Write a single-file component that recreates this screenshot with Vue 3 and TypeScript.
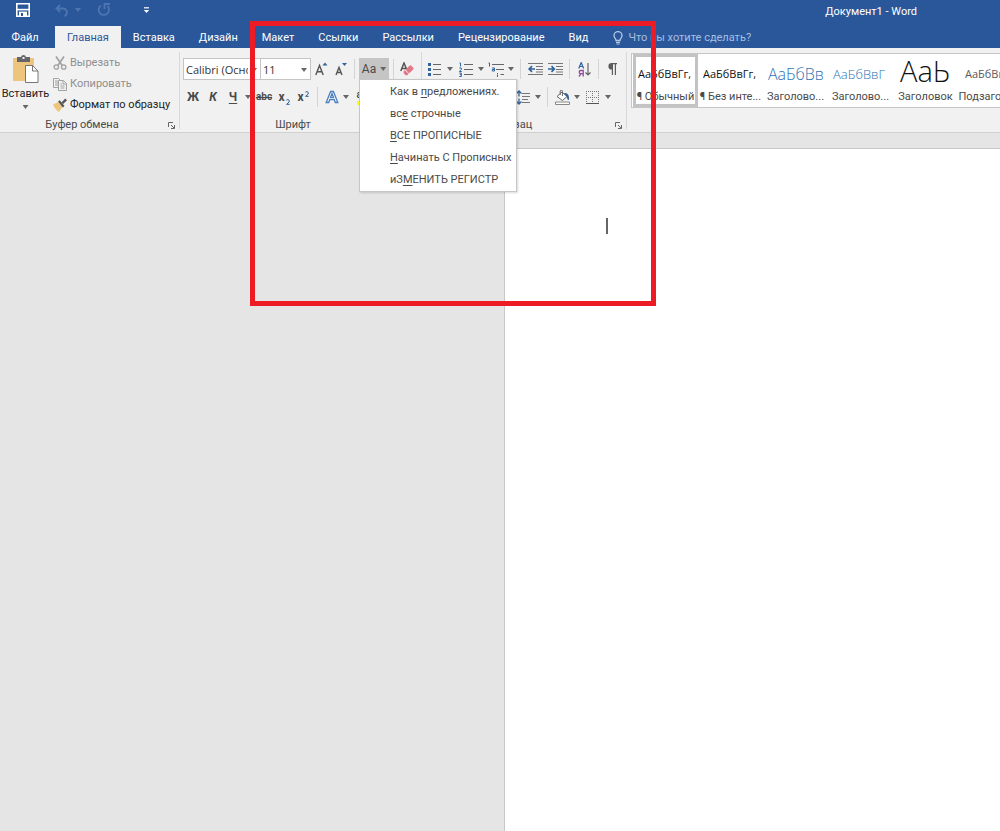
<script setup lang="ts">
import { ref } from 'vue'

interface StyleCard {
  preview: string
  label: string
  kind: string
}

interface CaseItem {
  before: string
  key: string
  after: string
}

const tabs: string[] = ['Файл', 'Главная', 'Вставка', 'Дизайн', 'Макет', 'Ссылки', 'Рассылки', 'Рецензирование', 'Вид']
const activeTab = ref('Главная')
const activeStyle = ref('normal')
const fontName = ref('Calibri (Основной текст)')
const fontSize = ref('11')

const caseItems: CaseItem[] = [
  { before: 'Как в ', key: 'п', after: 'редложениях.' },
  { before: 'вс', key: 'е', after: ' строчные' },
  { before: '', key: 'В', after: 'СЕ ПРОПИСНЫЕ' },
  { before: '', key: 'Н', after: 'ачинать С Прописных' },
  { before: 'иЗ', key: 'М', after: 'ЕНИТЬ РЕГИСТР' },
]

const styleCards: StyleCard[] = [
  { preview: 'АаБбВвГг,', label: '¶ Обычный', kind: 'normal' },
  { preview: 'АаБбВвГг,', label: '¶ Без инте...', kind: 'plain' },
  { preview: 'АаБбВв', label: 'Заголово...', kind: 'h1' },
  { preview: 'АаБбВвГ', label: 'Заголово...', kind: 'h2' },
  { preview: 'АаЬ', label: 'Заголовок', kind: 'title' },
  { preview: 'АаБбВв', label: 'Подзаголо...', kind: 'subtitle' },
]
</script>

<template>
  <div class="app">
    <header class="titlebar">
      <div class="quick">
        <button class="q-save" aria-label="Сохранить">
          <svg width="14" height="14" viewBox="0 0 14 14"><path d="M.8.8h12.4v12.4H.8z" fill="none" stroke="#fff" stroke-width="1.6" /><path d="M1 6.6h12" stroke="#fff" stroke-width="1.6" /><path d="M3 8.6h8V14H3z" fill="#fff" /><path d="M5 10h2v3H5z" fill="#2b579a" /></svg>
        </button>
        <button class="q-undo" aria-label="Отменить">
          <svg width="15" height="13" viewBox="0 0 15 13"><path d="M5 1 1.5 4.5 5 8M2 4.5h6.5a4 4 0 0 1 1 7.6" fill="none" stroke="#4d75b1" stroke-width="1.8" /></svg>
        </button>
        <span class="caret dim"></span>
        <button class="q-redo" aria-label="Повторить">
          <svg width="14" height="14" viewBox="0 0 14 14"><path d="M4 2.4A5.2 5.2 0 1 0 10.4 3M7.5 6V1H13" fill="none" stroke="#4d75b1" stroke-width="1.8" /></svg>
        </button>
        <button class="q-more" aria-label="Настройка панели">
          <svg width="7" height="7" viewBox="0 0 7 7"><path d="M1 .8h5" stroke="#fff" stroke-width="1.2" /><path d="M.8 3h5.4L3.5 6z" fill="#fff" /></svg>
        </button>
      </div>
      <span class="doc-title">Документ1 - Word</span>
    </header>

    <nav class="tabs">
      <button
        v-for="tab in tabs"
        :key="tab"
        class="tab"
        :class="{ active: tab === activeTab, file: tab === 'Файл' }"
        @click="activeTab = tab"
      >{{ tab }}</button>
      <label class="tell">
        <svg width="10" height="14" viewBox="0 0 10 14"><path d="M3 9.500C3 7.700 1 7 1 4.600a4 4 0 0 1 8 0C9 7 7 7.700 7 9.500z" fill="none" stroke="#b4c7e4" stroke-width="1.300" /><path d="M3 11.300h4M3.500 13h3" stroke="#b4c7e4" stroke-width="1.200" /></svg>
        <input type="text" placeholder="Что вы хотите сделать?" aria-label="Что вы хотите сделать?" />
      </label>
    </nav>

    <section class="ribbon">
      <div class="group clipboard">
        <div class="clip-body">
          <button class="paste">
            <svg width="28" height="28" viewBox="0 0 28 28"><path d="M1 3h21v23H1z" fill="#edc57c" /><path d="M5 2h4a2.600 2.600 0 0 1 5 0h4v5H5z" fill="#66666a" /><path d="M10.500 2h2v2h-2z" fill="#f1f1f1" /><path d="M13.500 10.500h7l5.500 5.500v11.500H13.500z" fill="#fff" stroke="#77777a" /><path d="M20.500 10.500V16H26" fill="none" stroke="#77777a" /></svg>
            <span>Вставить</span>
            <i class="caret"></i>
          </button>
          <div class="clip-list">
            <button class="muted">
              <svg width="14" height="14" viewBox="0 0 14 14"><path d="m3 .5 6.200 9M11 .5 4.800 9.500" stroke="#a2a2a2" stroke-width="1.700" /><circle cx="3.300" cy="11" r="2.200" fill="none" stroke="#a2a2a2" stroke-width="1.300" /><circle cx="10.700" cy="11" r="2.200" fill="none" stroke="#a2a2a2" stroke-width="1.300" /></svg>
              Вырезать
            </button>
            <button class="muted">
              <svg width="14" height="14" viewBox="0 0 14 14"><path d="M5 10.500H.5V1.500h5L7 3M2 4h3M2 6h3M2 8h3M5.500 3.500h5l3 3v7h-8zM10 3.500V7h3.500M7.500 7H9M7.500 9h4M7.500 11h4" fill="none" stroke="#a2a2a2" /></svg>
              Копировать
            </button>
            <button>
              <svg width="14" height="14" viewBox="0 0 14 14"><path d="M0 6.500 5 4l4.500 5L6 14C3.500 12.500 1.500 10 0 6.500z" fill="#edc57c" /><path d="m5 3.500 1.800-1.300L11.500 8l-1.700 1.500z" fill="#555" /><path d="m8.500 4.500 3.700-4L14 2.300 10.200 6z" fill="#555" /></svg>
              Формат по образцу
            </button>
          </div>
        </div>
        <footer><span>Буфер обмена</span><button class="launch" aria-label="Буфер обмена: параметры"><svg width="7" height="7" viewBox="0 0 7 7"><path d="M.5 5V.5H5M3 3l3 3M6.500 3v3.500H3" fill="none" stroke="#666" /></svg></button></footer>
      </div>

      <div class="group font">
        <div class="row">
          <span class="combo name">
            <select v-model="fontName" aria-label="Шрифт"><option>Calibri (Основной текст)</option><option>Arial</option></select>
            <i class="caret"></i>
          </span>
          <span class="combo size">
            <select v-model="fontSize" aria-label="Размер шрифта"><option>11</option><option>12</option></select>
            <i class="caret"></i>
          </span>
          <button class="w21" aria-label="Увеличить размер"><svg width="13" height="14" viewBox="0 0 13 14"><path d="m.8 13 3.700-9.500L8.200 13M2.200 9.800h4.600" fill="none" stroke="#555" stroke-width="1.400" /><path d="M7.500 3.500h5L10 .5z" fill="#31639c" /></svg></button>
          <button class="w18" aria-label="Уменьшить размер"><svg width="12" height="14" viewBox="0 0 12 14"><path d="m1 13 3-7.500L7 13M2.200 10.500h3.600" fill="none" stroke="#555" stroke-width="1.400" /><path d="M7 1h5L9.500 4z" fill="#31639c" /></svg></button>
          <i class="sep"></i>
          <div class="case">
            <button class="case-button" aria-haspopup="menu" aria-expanded="true">Аа<i class="caret"></i></button>
            <div class="case-menu" role="menu">
              <button v-for="item in caseItems" :key="item.key" role="menuitem"><span>{{ item.before }}<u>{{ item.key }}</u>{{ item.after }}</span></button>
            </div>
          </div>
          <i class="sep"></i>
          <button class="w18" aria-label="Очистить формат"><svg width="14" height="14" viewBox="0 0 14 14"><path d="M.8 9 4 1l2.500 6M2 6.500h4" fill="none" stroke="#555" stroke-width="1.500" /><path d="m3.500 9.500 6.200-6a1 1 0 0 1 1.400 0l2.200 2.300a1 1 0 0 1 0 1.400l-6 6H5.500l-2-2.200z" fill="#e3788b" /><path d="m5.300 8 3.800 3.800" stroke="#f1f1f1" /></svg></button>
        </div>
        <div class="row">
          <button class="w20 bold">Ж</button>
          <button class="w20 bold italic">К</button>
          <button class="w20 bold"><u>Ч</u></button>
          <button class="w10" aria-label="Вид подчёркивания"><i class="caret"></i></button>
          <button class="w22 strike">abc</button>
          <button class="w18 bold index"><span>x</span><svg width="4" height="6" viewBox="0 0 4 6"><path d="M.4 1.200Q2-.2 3.200 1.300T.5 5.300h3.200" fill="none" stroke="#31639c" /></svg></button>
          <button class="w20 bold index up"><span>x</span><svg width="4" height="6" viewBox="0 0 4 6"><path d="M.4 1.200Q2-.2 3.200 1.300T.5 5.300h3.200" fill="none" stroke="#31639c" /></svg></button>
          <i class="sep"></i>
          <button class="w20" aria-label="Текстовые эффекты"><svg width="14" height="14" viewBox="0 0 14 14"><path d="M1.200 12.500 5.600 1.500h2.800l4.400 11h-2.500l-1-2.800H4.700l-1 2.800zM5.400 7.700h3.200L7 3.500z" fill="#fff" stroke="#4c7fbe" stroke-width="1.300" /></svg></button>
          <button class="w8" aria-label="Выбор эффекта"><i class="caret"></i></button>
          <button class="w24 marker" aria-label="Цвет выделения"><span>ab</span></button>
        </div>
        <footer><span>Шрифт</span></footer>
      </div>

      <div class="group paragraph">
        <div class="row">
          <button class="w20" aria-label="Маркеры"><svg width="13" height="14" viewBox="0 0 13 14"><path d="M5 2.500h8M5 7.500h8M5 12.500h8" stroke="#666" /><path d="M0 1h3v3H0zM0 6h3v3H0zM0 11h3v3H0z" fill="#31639c" /></svg></button>
          <button class="w12" aria-label="Виды маркеров"><i class="caret"></i></button>
          <button class="w20" aria-label="Нумерация"><svg width="14" height="15" viewBox="0 0 14 15"><path d="M5 2.500h9M5 7.500h9M5 12.500h9" stroke="#666" /><path d="M.5 1h1v3.500M.3 6h2v1.500l-2 2h2.400M.3 11h2v3.500h-2M.8 12.600h1.500" fill="none" stroke="#31639c" /></svg></button>
          <button class="w10" aria-label="Виды нумерации"><i class="caret"></i></button>
          <button class="w20" aria-label="Многоуровневый список"><svg width="16" height="15" viewBox="0 0 16 15"><path d="M4 2.500h12M8 7.500h8M12.500 12.500H16" stroke="#666" /><path d="M.5 1h1v3.500M4 6h2.500v3H4.300V7.500h2M9.500 11v1M9.500 12.500V15" fill="none" stroke="#31639c" /></svg></button>
          <button class="w10" aria-label="Уровни списка"><i class="caret"></i></button>
          <i class="sep"></i>
          <button class="w20" aria-label="Уменьшить отступ"><svg width="15" height="12" viewBox="0 0 15 12"><path d="M0 .5h15M8 3.500h7M8 6.500h7M8 9h7M0 11.500h15" stroke="#777" /><path d="M7 6H1.500M4 3.200 1.200 6 4 8.800" fill="none" stroke="#31639c" stroke-width="1.700" /></svg></button>
          <button class="w20" aria-label="Увеличить отступ"><svg width="15" height="12" viewBox="0 0 15 12"><path d="M0 .5h15M8 3.500h7M8 6.500h7M8 9h7M0 11.500h15" stroke="#777" /><path d="M0 6h5.500M3.500 3.200 6.300 6 3.500 8.800" fill="none" stroke="#31639c" stroke-width="1.700" /></svg></button>
          <i class="sep"></i>
          <button class="w20" aria-label="Сортировка"><svg width="13" height="15" viewBox="0 0 13 15"><path d="m.7 6.500 2.500-6 2.500 6M1.600 4.500h3.200" fill="none" stroke="#31639c" stroke-width="1.200" /><path d="M5.200 14.500v-6H2.800a1.500 1.500 0 0 0 0 3.200h2.400M3 11.700l-2 2.800" fill="none" stroke="#8f4a9e" stroke-width="1.300" /><path d="M10 1v12M7.500 10.500 10 13l2.500-2.500" fill="none" stroke="#666" stroke-width="1.200" /></svg></button>
          <i class="sep"></i>
          <button class="w18" aria-label="Непечатаемые знаки"><svg width="10" height="12" viewBox="0 0 10 12"><path d="M4.500 0H10v1.200H9V12H7.800V1.200H6V12H4.800V6.500A3.200 3.200 0 0 1 4.500 0z" fill="#5c5c5c" /></svg></button>
        </div>
        <div class="row">
          <button v-for="side in ['По левому краю', 'По центру', 'По правому краю', 'По ширине']" :key="side" class="w20" :aria-label="side"><svg width="13" height="12" viewBox="0 0 13 12"><path d="M0 .5h13M0 4h13M0 7.500h13M0 11h13" stroke="#666" /></svg></button>
          <i class="sep"></i>
          <button class="w20" aria-label="Интервал"><svg width="14" height="15" viewBox="0 0 14 15"><path d="M6 3.500h8M6 6.500h8M6 9.500h6M6 12.500h8" stroke="#777" /><path d="M3 1v5.500M.5 3.500 3 1l2.500 2.500M3 8.500V14M.5 11.500 3 14l2.500-2.500" fill="none" stroke="#31639c" stroke-width="1.300" /></svg></button>
          <button class="w10" aria-label="Выбор интервала"><i class="caret"></i></button>
          <i class="sep"></i>
          <button class="w20" aria-label="Заливка"><svg width="15" height="15" viewBox="0 0 15 15"><path d="M.5 12h14v2.500H.5z" fill="#fff" stroke="#888" /><path d="m2 6.500 5-4.500 5 4.500-4.500 4z" fill="#fff" stroke="#666" /><path d="M5.200 5V1.200a1 1 0 0 1 2.200 0V6" fill="none" stroke="#666" /><path d="M9 3.200c3-.5 5.500 1.300 5 6.800-1.500 0-2-1-2-3z" fill="#31639c" /></svg></button>
          <button class="w10" aria-label="Цвет заливки"><i class="caret"></i></button>
          <button class="w20" aria-label="Границы"><svg width="13" height="13" viewBox="0 0 13 13"><path d="M0 .5h13M0 6.500h13M.5 0v12M6.500 0v12M12.500 0v12" stroke="#777" stroke-dasharray="1 1" /><path d="M0 12.500h13" stroke="#555" /></svg></button>
          <button class="w12" aria-label="Виды границ"><i class="caret"></i></button>
        </div>
        <footer><span>Абзац</span><button class="launch" aria-label="Абзац: параметры"><svg width="7" height="7" viewBox="0 0 7 7"><path d="M.5 5V.5H5M3 3l3 3M6.500 3v3.500H3" fill="none" stroke="#666" /></svg></button></footer>
      </div>

      <div class="gallery">
        <button
          v-for="card in styleCards"
          :key="card.kind"
          class="card"
          :class="[card.kind, { chosen: card.kind === activeStyle }]"
          @click="activeStyle = card.kind"
        >
          <span class="preview">{{ card.preview }}</span>
          <span class="card-label">{{ card.label }}</span>
        </button>
      </div>
    </section>

    <main class="canvas">
      <article class="page"><i class="text-cursor"></i></article>
    </main>

    <div class="highlight" aria-hidden="true"></div>
  </div>
</template>

<style>
body {
  margin: 0;
}
</style>

<style scoped>
.app {
  position: relative;
  display: flex;
  flex-direction: column;
  min-height: 100vh;
  overflow: hidden;
  background: #e5e5e5;
  color: #4a4a4a;
  font-family: Roboto, "Open Sans", sans-serif;
  font-size: 11px;
  line-height: 16px;
}
.app * {
  box-sizing: border-box;
}
button {
  display: flex;
  align-items: center;
  justify-content: center;
  flex: none;
  margin: 0;
  padding: 0;
  border: 0;
  background: none;
  color: inherit;
  font: inherit;
  white-space: nowrap;
}
svg {
  display: block;
  flex: none;
}
.caret {
  flex: none;
  width: 6px;
  height: 4px;
  background: #666;
  clip-path: polygon(0 0, 100% 0, 50% 100%);
}
.caret.dim {
  background: #4d75b1;
}

.titlebar {
  display: flex;
  justify-content: space-between;
  height: 25px;
  padding: 0 83px 0 16px;
  background: #2a579a;
  color: #fff;
}
.quick {
  display: flex;
  align-items: center;
  height: 20px;
}
.q-undo {
  margin-left: 25px;
}
.quick .dim {
  margin-left: 5px;
}
.q-redo {
  margin-left: 16px;
}
.q-more {
  margin-left: 32px;
}
.doc-title {
  padding-top: 4px;
}

.tabs {
  display: flex;
  height: 23px;
  background: #2a579a;
  color: #fff;
}
.tab {
  height: 23px;
  padding: 2px 12px 0;
}
.tab.file {
  width: 55px;
  padding: 2px 17px 0 12px;
}
.tab.active {
  height: 22px;
  margin-top: 1px;
  padding-top: 1px;
  background: #f1f1f1;
  color: #2a579a;
}
.tell {
  display: flex;
  align-items: center;
  gap: 5px;
  margin-left: 13px;
  padding-top: 2px;
  flex: 1;
}
.tell input {
  flex: 1;
  min-width: 0;
  padding: 0;
  border: 0;
  outline: 0;
  background: none;
  color: #fff;
  font: inherit;
}
.tell input::placeholder {
  color: #a9bfe0;
  opacity: 1;
}

.ribbon {
  display: flex;
  height: 85px;
  background: #f1f1f1;
  border-bottom: 1px solid #d0d0d0;
}
.group {
  position: relative;
  display: flex;
  flex-direction: column;
  flex: none;
  margin: 4px 0 3px;
  border-right: 1px solid #d8d8d8;
}
.group footer {
  display: flex;
  height: 16px;
  margin-top: auto;
  margin-bottom: -4px;
}
.group footer span {
  flex: 1;
  text-align: center;
}
.launch {
  width: 15px;
}
.clipboard {
  width: 180px;
}
.clip-body {
  display: flex;
}
.paste {
  flex-direction: column;
  justify-content: flex-start;
  width: 51px;
  padding-top: 3px;
  color: #222;
}
.paste span {
  margin-top: 3px;
}
.paste .caret {
  margin-top: 3px;
}
.clip-list {
  display: flex;
  flex-direction: column;
  margin-left: 2px;
}
.clip-list button {
  justify-content: flex-start;
  gap: 3px;
  height: 21px;
  color: #222;
}
.clip-list .muted {
  color: #8f8f8f;
}
.font {
  width: 242px;
}
.font .row {
  padding-left: 3px;
}
.font footer {
  margin-right: 15px;
}
.paragraph {
  width: 205px;
}
.row {
  display: flex;
  align-items: center;
  height: 22px;
  margin-top: 6px;
}
.paragraph .row {
  padding-left: 2px;
}
.row > button {
  height: 22px;
}
.w8 { width: 8px; }
.w10 { width: 10px; }
.w12 { width: 12px; }
.w18 { width: 18px; }
.w20 { width: 20px; }
.w21 { width: 21px; }
.w22 { width: 22px; }
.w24 { width: 24px; }
.sep {
  flex: none;
  width: 1px;
  height: 20px;
  margin: 0 4px;
  background: #d4d4d4;
}
.combo {
  position: relative;
  flex: none;
  height: 22px;
}
.combo select {
  width: 100%;
  height: 100%;
  margin: 0;
  padding: 0 12px 0 2px;
  border: 1px solid #c4c4c4;
  border-radius: 0;
  appearance: none;
  background: #fff;
  color: #333;
  font-family: "Open Sans", sans-serif;
  font-size: 11px;
}
.combo .caret {
  position: absolute;
  right: 4px;
  top: 10px;
}
.combo.name {
  width: 78px;
}
.combo.size {
  width: 51px;
  margin-left: -1px;
}
.bold {
  font-size: 12px;
  font-weight: 700;
}
.italic {
  font-style: italic;
}
.strike {
  text-decoration: line-through;
  font-size: 10px;
  font-weight: 600;
}
.index {
  gap: 1px;
}
.index svg {
  margin-top: 9px;
}
.index.up svg {
  margin-top: 0;
  margin-bottom: 6px;
}
.marker {
  font-size: 10px;
  font-weight: 600;
}
.marker span {
  height: 16px;
  line-height: 12px;
  border-bottom: 4px solid #ff0;
}
.case {
  position: relative;
}
.case-button {
  gap: 4px;
  width: 30px;
  height: 22px;
  background: #c5c5c5;
  font-size: 12px;
}
.case-menu {
  position: absolute;
  z-index: 2;
  top: 21px;
  left: 0;
  min-width: 158px;
  padding-top: 1px;
  border: 1px solid #c6c6c6;
  background: #fff;
  box-shadow: 1px 1px 2px rgba(0, 0, 0, 0.15);
}
.case-menu button {
  justify-content: flex-start;
  width: 100%;
  height: 22px;
  padding: 0 4px 0 30px;
}
u {
  text-underline-offset: 2px;
}

.gallery {
  display: flex;
  flex: 1;
  min-width: 0;
  height: 55px;
  margin: 5px 0 0 4px;
  padding-left: 1px;
  overflow: hidden;
  border: 1px solid #c6c6c6;
  border-right: 0;
  background: #fff;
}
.card {
  flex-direction: column;
  justify-content: flex-start;
  width: 65px;
  height: 53px;
  padding: 4px 4px 0;
}
.card.chosen {
  box-shadow: inset 0 0 0 3px #c3c3c3;
}
.preview {
  display: flex;
  align-items: center;
  width: 55px;
  height: 31px;
  overflow: hidden;
  color: #111;
  font-family: "Open Sans", sans-serif;
}
.card-label {
  height: 16px;
}
.h1 .preview {
  color: #2e74b5;
  font-size: 16px;
  font-weight: 300;
}
.h2 .preview {
  color: #2e74b5;
  font-size: 13px;
  font-weight: 300;
}
.title .preview {
  align-items: flex-start;
  overflow: visible;
  padding-left: 2px;
  font-size: 29px;
  font-weight: 300;
  line-height: 26px;
}
.subtitle .preview {
  padding-left: 2px;
  color: #5a5a5a;
}

.canvas {
  display: flex;
  flex: 1;
  padding-top: 15px;
  padding-left: calc(50% + 4px);
}
.page {
  flex: 1;
  padding: 69px 0 0 101px;
  border-top: 1px solid #c8c8c8;
  border-left: 1px solid #c8c8c8;
  background: #fff;
}
.text-cursor {
  display: block;
  width: 2px;
  height: 16px;
  background: #666;
}
.highlight {
  position: absolute;
  z-index: 5;
  top: 21px;
  left: 250px;
  width: 406px;
  height: 285px;
  border: 5px solid #ed1c24;
  pointer-events: none;
}
</style>
